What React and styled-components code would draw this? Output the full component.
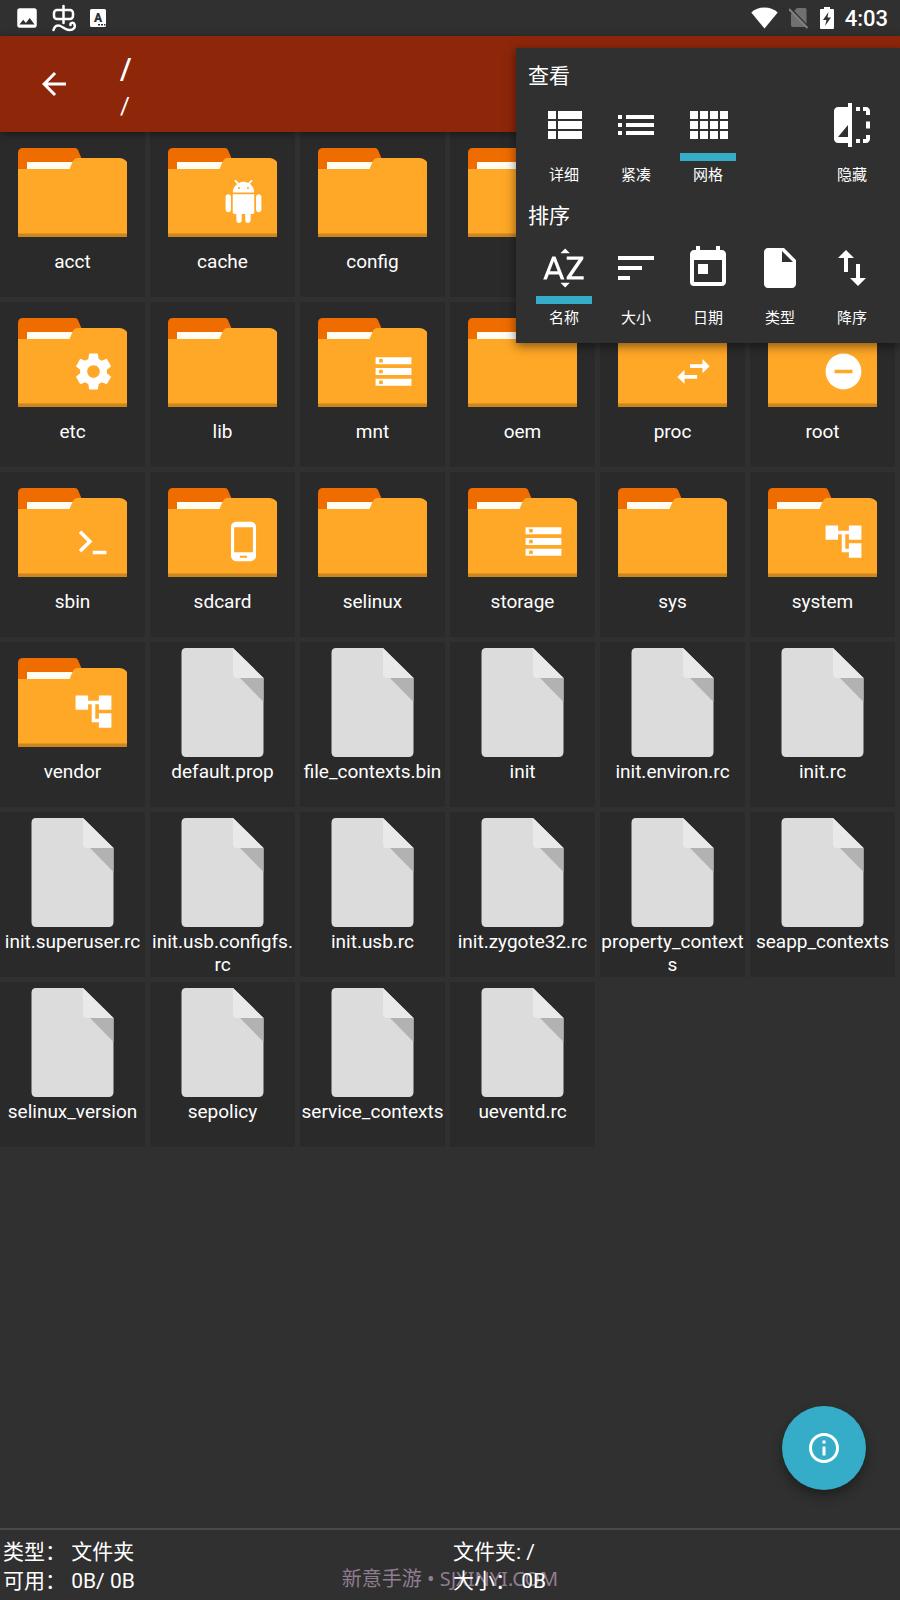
import React from 'react'
import styled, { createGlobalStyle, css, ThemeProvider } from 'styled-components'
import {
  MdArrowBack,
  MdImage,
  MdInfoOutline,
  MdInsertDriveFile,
  MdList,
  MdSort,
  MdSortByAlpha,
  MdSwapVert,
  MdToday,
} from 'react-icons/md'

const theme = {
  color: {
    background: '#303030',
    tile: '#2a2a2a',
    primary: '#8e260a',
    accent: '#35acc8',
    text: '#fff',
    divider: '#4a4a4a',
    watermark: '#8f7d90',
  },
  fontSize: {
    small: '15px',
    body: '19px',
    medium: '21px',
    subtitle: '24px',
    title: '30px',
  },
}

const badges = {
  android:
    'M6 18c0 .55.45 1 1 1h1v3.5c0 .83.67 1.5 1.5 1.5s1.5-.67 1.5-1.5V19h2v3.5c0 .83.67 1.5 1.5 1.5s1.5-.67 1.5-1.5V19h1c.55 0 1-.45 1-1V8H6v10zM3.5 8C2.67 8 2 8.67 2 9.5v7c0 .83.67 1.5 1.5 1.5S5 17.33 5 16.5v-7C5 8.67 4.33 8 3.5 8zm17 0c-.83 0-1.5.67-1.5 1.5v7c0 .83.67 1.5 1.5 1.5s1.5-.67 1.5-1.5v-7c0-.83-.67-1.5-1.5-1.5zm-4.97-5.84l1.3-1.3c.2-.2.2-.51 0-.71-.2-.2-.51-.2-.71 0l-1.48 1.48C13.85 1.23 12.95 1 12 1c-.96 0-1.86.23-2.66.63L7.85.15c-.2-.2-.51-.2-.71 0-.2.2-.2.51 0 .71l1.31 1.31C6.97 3.26 6 5.01 6 7h12c0-1.99-.97-3.75-2.47-4.84zM10 5H9V4h1v1zm5 0h-1V4h1v1z',
  settings:
    'M19.43 12.98c.04-.32.07-.64.07-.98s-.03-.66-.07-.98l2.11-1.65c.19-.15.24-.42.12-.64l-2-3.46c-.12-.22-.39-.3-.61-.22l-2.49 1c-.52-.4-1.08-.73-1.69-.98l-.38-2.65C14.46 2.18 14.25 2 14 2h-4c-.25 0-.46.18-.49.42l-.38 2.65c-.61.25-1.17.59-1.69.98l-2.49-1c-.23-.09-.49 0-.61.22l-2 3.46c-.13.22-.07.49.12.64l2.11 1.65c-.04.32-.07.65-.07.98s.03.66.07.98l-2.11 1.65c-.19.15-.24.42-.12.64l2 3.46c.12.22.39.3.61.22l2.49-1c.52.4 1.08.73 1.69.98l.38 2.65c.03.24.24.42.49.42h4c.25 0 .46-.18.49-.42l.38-2.65c.61-.25 1.17-.59 1.69-.98l2.49 1c.23.09.49 0 .61-.22l2-3.46c.12-.22.07-.49-.12-.64l-2.11-1.65zM12 15.5c-1.93 0-3.5-1.57-3.5-3.5s1.57-3.5 3.5-3.5 3.5 1.57 3.5 3.5-1.57 3.5-3.5 3.5z',
  storage:
    'M2 20h20v-4H2v4zm2-3h2v2H4v-2zM2 4v4h20V4H2zm4 3H4V5h2v2zm-4 7h20v-4H2v4zm2-3h2v2H4v-2z',
  swap: 'M6.99 11L3 15l3.99 4v-3H14v-2H6.99v-3zM21 9l-3.99-4v3H10v2h7.01v3L21 9z',
  blocked:
    'M12 2C6.48 2 2 6.48 2 12s4.48 10 10 10 10-4.48 10-10S17.52 2 12 2zm5 11H7v-2h10v2z',
  terminal:
    'M5.2 5.9L3.8 7.3 8.5 12l-4.7 4.7 1.4 1.4L11.4 12zM11.6 17.2h7.6v1.9h-7.6z',
  phone:
    'M16 1H8C6.34 1 5 2.34 5 4v16c0 1.66 1.34 3 3 3h8c1.66 0 3-1.34 3-3V4c0-1.66-1.34-3-3-3zm-2 20h-4v-1h4v1zm3.25-3H6.75V4h10.5v14z',
  tree: 'M22 11V3h-7v3H9V3H2v8h7V8h2v10h4v3h7v-8h-7v3h-2V8h2v3z',
}

const entries = [
  { name: 'acct', folder: true },
  { name: 'cache', folder: true, badge: 'android' },
  { name: 'config', folder: true },
  { name: 'd', folder: true },
  { name: 'data', folder: true },
  { name: 'dev', folder: true },
  { name: 'etc', folder: true, badge: 'settings' },
  { name: 'lib', folder: true },
  { name: 'mnt', folder: true, badge: 'storage' },
  { name: 'oem', folder: true },
  { name: 'proc', folder: true, badge: 'swap' },
  { name: 'root', folder: true, badge: 'blocked' },
  { name: 'sbin', folder: true, badge: 'terminal' },
  { name: 'sdcard', folder: true, badge: 'phone' },
  { name: 'selinux', folder: true },
  { name: 'storage', folder: true, badge: 'storage' },
  { name: 'sys', folder: true },
  { name: 'system', folder: true, badge: 'tree' },
  { name: 'vendor', folder: true, badge: 'tree' },
  { name: 'default.prop' },
  { name: 'file_contexts.bin' },
  { name: 'init' },
  { name: 'init.environ.rc' },
  { name: 'init.rc' },
  { name: 'init.superuser.rc' },
  { name: 'init.usb.configfs.rc' },
  { name: 'init.usb.rc' },
  { name: 'init.zygote32.rc' },
  { name: 'property_contexts' },
  { name: 'seapp_contexts' },
  { name: 'selinux_version' },
  { name: 'sepolicy' },
  { name: 'service_contexts' },
  { name: 'ueventd.rc' },
]

const FolderIcon = ({ badge }) => (
  <TileIcon viewBox="0 0 109 109" aria-hidden="true">
    <path d="M0 34V15q0-5 5-5h52q2 0 3 2l5 12v10z" fill="#ef6c00" />
    <path d="M9 24h50v9H9z" fill="#fffdf2" />
    <path
      d="M0 31h51.500l3-7q1.500-4 5-4h41.500q5 0 8 4v75H0z"
      fill="#ffa726"
    />
    <path d="M0 95.500h109V99H0z" fill="#cc861f" />
    {badge && (
      <svg x="54" y="42" width="43" height="43" viewBox="0 0 24 24">
        <path d={badges[badge]} fill="#fff" />
      </svg>
    )}
  </TileIcon>
)

const FileIcon = () => (
  <TileIcon viewBox="0 0 109 109" aria-hidden="true">
    <path
      d="M18 0h47l30.500 30V104q0 5-5 5h-72.500q-4.500 0-4.500-5V5q0-5 4.500-5z"
      fill="#dcdcdc"
    />
    <path d="M65 0l30.500 30H69q-4 0-4-4z" fill="#e9e9e9" />
    <path d="M72 30h23.500v24z" fill="#b2b2b2" />
  </TileIcon>
)

const ViewListIcon = () => (
  <svg viewBox="0 0 24 24" fill="currentColor" aria-hidden="true">
    <path d="M4 14h4v-4H4v4zm0 5h4v-4H4v4zM4 9h4V5H4v4zm5 5h12v-4H9v4zm0 5h12v-4H9v4zM9 5v4h12V5H9z" />
  </svg>
)

const ViewGridIcon = () => (
  <svg viewBox="0 0 24 24" fill="currentColor" aria-hidden="true">
    <path d="M3 9h4V5H3v4zm0 5h4v-4H3v4zm5 0h4v-4H8v4zm5 0h4v-4h-4v4zM8 9h4V5H8v4zm5-4v4h4V5h-4zm5 9h4v-4h-4v4zM3 19h4v-4H3v4zm5 0h4v-4H8v4zm5 0h4v-4h-4v4zm5 0h4v-4h-4v4zm0-14v4h4V5h-4z" />
  </svg>
)

const HiddenIcon = () => (
  <svg viewBox="0 0 24 24" fill="currentColor" aria-hidden="true">
    <path d="M10 3H5c-1.100 0-2 .9-2 2v14c0 1.100.9 2 2 2h5v2h2V1h-2v2zm0 15H5l5-6v6z" />
    <path d="M14 3h2v2h-2zM14 19h2v2h-2zM19 10.300h2v3.400h-2zM17.500 3H19c1.100 0 2 .9 2 2v2h-2V5h-1.500zM17.500 21H19c1.100 0 2-.9 2-2v-2h-2v2h-1.500z" />
  </svg>
)

const BugIcon = () => (
  <svg width="26" height="28" viewBox="0 0 26 28" fill="none" aria-hidden="true">
    <g stroke="#fff" strokeWidth="2.500" strokeLinecap="round" strokeLinejoin="round">
      <rect x="2" y="6" width="19" height="9" rx="3" />
      <path d="M11.500 2v17" />
      <path d="M1.500 26c1-4 4-5.500 7-4s5 4 9 4c4.500 0 6-3 5-5.500s-4.500-2-4 .5" />
    </g>
  </svg>
)

const InputMethodIcon = () => (
  <svg width="16" height="18" viewBox="0 0 16 18" aria-hidden="true">
    <rect width="16" height="18" rx="1.500" fill="#fff" />
    <text
      x="8"
      y="13"
      textAnchor="middle"
      fontFamily="Roboto, sans-serif"
      fontSize="12"
      fontWeight="900"
      fill="#303030"
    >
      A
    </text>
    <path d="M8 15h2v1.500H8zM11 15h2v1.500h-2zM14 15h1.500v1.500H14z" fill="#303030" />
  </svg>
)

const WifiIcon = () => (
  <svg width="27" height="22" viewBox="0 0 27 22" aria-hidden="true">
    <path d="M13.500 21.500L.3 5.500Q6 .5 13.500.5t13.200 5z" fill="#fff" />
  </svg>
)

const NoSimIcon = () => (
  <svg width="20" height="22" viewBox="0 0 20 22" aria-hidden="true">
    <path d="M8 1h8q1.500 0 1.500 1.500v16q0 1.500-1.500 1.500H4q-2 0-2-2V7z" fill="#707070" />
    <path d="M1.500 1.500l19 20" stroke="#303030" strokeWidth="2" />
    <path d="M0 2l18.500 19" stroke="#808080" strokeWidth="2" />
  </svg>
)

const BatteryIcon = () => (
  <svg width="14" height="22" viewBox="0 0 14 22" aria-hidden="true">
    <path d="M4 0h6v2h3q1 0 1 1v18q0 1-1 1H1q-1 0-1-1V3q0-1 1-1h3z" fill="#fff" />
    <path d="M8.500 5L3 13h3.500L5 19l6-8.500H7.500z" fill="#303030" />
  </svg>
)

const viewOptions = [
  { label: '详细', icon: <ViewListIcon /> },
  { label: '紧凑', icon: <MdList /> },
  { label: '网格', icon: <ViewGridIcon />, active: true },
  null,
  { label: '隐藏', icon: <HiddenIcon /> },
]

const sortOptions = [
  { label: '名称', icon: <MdSortByAlpha />, active: true },
  { label: '大小', icon: <MdSort /> },
  { label: '日期', icon: <MdToday /> },
  { label: '类型', icon: <MdInsertDriveFile /> },
  { label: '降序', icon: <MdSwapVert /> },
]

const OptionGroup = ({ title, options }) => (
  <Group>
    <GroupTitle>{title}</GroupTitle>
    <Options>
      {options.map((option, index) =>
        option ? (
          <Option key={option.label} aria-pressed={!!option.active}>
            <OptionIcon $active={option.active}>{option.icon}</OptionIcon>
            {option.label}
          </Option>
        ) : (
          <span key={index} />
        )
      )}
    </Options>
  </Group>
)

const App = () => (
  <ThemeProvider theme={theme}>
    <GlobalStyle />

    <Page>
      <StatusBar>
        <StatusGroup $gap="12px">
          <MdImage size={26} />
          <BugIcon />
          <InputMethodIcon />
        </StatusGroup>
        <StatusGroup $gap="11px">
          <WifiIcon />
          <NoSimIcon />
          <BatteryIcon />
          <Clock>4:03</Clock>
        </StatusGroup>
      </StatusBar>

      <Header>
        <BackButton aria-label="back">
          <MdArrowBack size={36} />
        </BackButton>
        <Heading>
          <Title>/</Title>
          <Subtitle>/</Subtitle>
        </Heading>
      </Header>

      <Grid>
        {entries.map(({ name, folder, badge }) => (
          <Tile key={name}>
            {folder ? <FolderIcon badge={badge} /> : <FileIcon />}
            <TileName>{name}</TileName>
          </Tile>
        ))}
      </Grid>

      <Footer>
        <Watermark>新意手游 • SJXINYI.COM</Watermark>
        <FooterColumn>
          <span>类型： 文件夹</span>
          <span>可用： 0B/ 0B</span>
        </FooterColumn>
        <FooterColumn>
          <span>文件夹: /</span>
          <span>大小： 0B</span>
        </FooterColumn>
      </Footer>

      <Panel>
        <OptionGroup title="查看" options={viewOptions} />
        <OptionGroup title="排序" options={sortOptions} />
      </Panel>

      <InfoButton aria-label="info">
        <MdInfoOutline size={36} />
      </InfoButton>
    </Page>
  </ThemeProvider>
)

export default App

const GlobalStyle = createGlobalStyle`
  * {
    box-sizing: border-box;
  }

  body {
    margin: 0;
    background: ${theme.color.background};
    color: ${theme.color.text};
    font-family: Roboto, 'Noto Sans CJK SC', sans-serif;
  }
`

const PlainButton = styled.button`
  display: flex;
  padding: 0;
  border: 0;
  background: none;
  color: inherit;
  font: inherit;
  cursor: pointer;
`

const Page = styled.div`
  display: flex;
  flex-direction: column;
  position: relative;
  min-height: 100vh;
`

const StatusBar = styled.div`
  display: flex;
  align-items: center;
  justify-content: space-between;
  height: 36px;
  padding: 0 12px 0 14px;
`

const StatusGroup = styled.div`
  display: flex;
  align-items: center;
  gap: ${({ $gap }) => $gap};
`

const Clock = styled.span`
  font-size: 22px;
  font-weight: 500;
`

const Header = styled.header`
  display: flex;
  align-items: center;
  gap: 48px;
  height: 96px;
  padding: 0 36px;
  background: ${({ theme }) => theme.color.primary};
  box-shadow: 0 2px 8px rgba(0, 0, 0, 0.4);
  z-index: 1;
`

const BackButton = styled(PlainButton)``

const Heading = styled.div`
  display: flex;
  flex-direction: column;
  padding-top: 4px;
`

const Title = styled.h1`
  margin: 0;
  font-size: ${({ theme }) => theme.fontSize.title};
  font-weight: 500;
  line-height: 40px;
`

const Subtitle = styled.span`
  font-size: ${({ theme }) => theme.fontSize.subtitle};
  line-height: 34px;
`

const Grid = styled.main`
  display: grid;
  grid-template-columns: repeat(6, 1fr);
  grid-auto-rows: minmax(165px, auto);
  align-content: start;
  gap: 5px;
  flex: 1;
  padding-right: 5px;
`

const Tile = styled(PlainButton)`
  flex-direction: column;
  align-items: center;
  gap: 3px;
  min-width: 0;
  padding-top: 6px;
  background: ${({ theme }) => theme.color.tile};
`

const TileIcon = styled.svg`
  flex: none;
  width: 109px;
  height: 109px;
`

const TileName = styled.span`
  max-width: 100%;
  font-size: ${({ theme }) => theme.fontSize.body};
  line-height: 23px;
  overflow-wrap: anywhere;
`

const Footer = styled.footer`
  display: grid;
  grid-template-columns: 1fr 1fr;
  position: relative;
  padding: 8px 0 4px;
  border-top: 2px solid ${({ theme }) => theme.color.divider};
  font-size: ${({ theme }) => theme.fontSize.medium};
  line-height: 29px;
`

const FooterColumn = styled.div`
  display: flex;
  flex-direction: column;
  position: relative;
  padding-left: 3px;
`

const Watermark = styled.span`
  position: absolute;
  right: 0;
  bottom: 7px;
  left: 0;
  color: ${({ theme }) => theme.color.watermark};
  font-family: 'Noto Sans', 'Noto Sans CJK SC', sans-serif;
  font-size: 20px;
  text-align: center;
`

const Panel = styled.aside`
  position: absolute;
  top: 48px;
  right: 0;
  padding: 13px 12px;
  background: ${({ theme }) => theme.color.background};
  box-shadow: 0 3px 10px rgba(0, 0, 0, 0.5);
  z-index: 2;
`

const Group = styled.section`
  display: flex;
  flex-direction: column;
  gap: 6px;

  & + & {
    gap: 9px;
    margin-top: 14px;
  }
`

const GroupTitle = styled.h2`
  margin: 0;
  font-size: ${({ theme }) => theme.fontSize.medium};
  font-weight: 400;
  line-height: 30px;
`

const Options = styled.div`
  display: grid;
  grid-template-columns: repeat(5, 72px);
`

const Option = styled(PlainButton)`
  flex-direction: column;
  align-items: center;
  gap: 2px;
  font-size: ${({ theme }) => theme.fontSize.small};
  line-height: 24px;
`

const OptionIcon = styled.span`
  padding: 4px;
  border-bottom: 8px solid transparent;

  ${({ $active, theme }) =>
    $active &&
    css`
      border-color: ${theme.color.accent};
    `}

  svg {
    display: block;
    width: 48px;
    height: 48px;
  }
`

const InfoButton = styled(PlainButton)`
  align-items: center;
  justify-content: center;
  position: absolute;
  right: 34px;
  bottom: 110px;
  width: 84px;
  height: 84px;
  border-radius: 50%;
  background: ${({ theme }) => theme.color.accent};
  box-shadow: 0 6px 12px rgba(0, 0, 0, 0.35);
`
